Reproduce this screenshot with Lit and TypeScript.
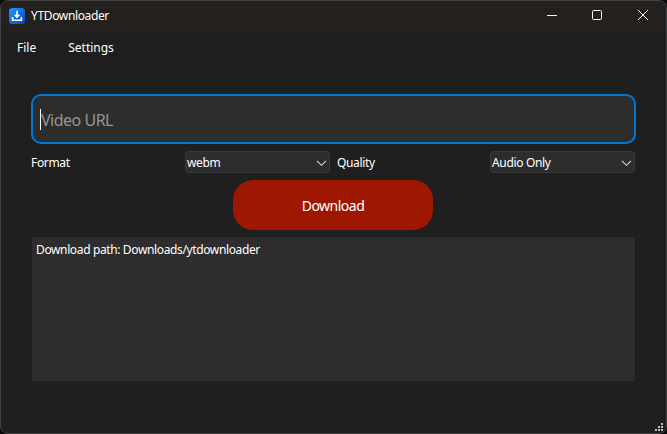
import { LitElement, html, css } from "lit";
import { customElement, property } from "lit/decorators.js";

@customElement("select-box")
class SelectBox extends LitElement {
  @property() value = "";
  @property({ type: Boolean, reflect: true }) warm = false;
  static styles = css`
    :host {
      display: flex;
      align-items: center;
      justify-content: space-between;
      box-sizing: border-box;
      width: 145px;
      height: 22px;
      padding: 0 2px 0 1px;
      background: #2d2d2d;
      border: 1px solid #3b3b3b;
      border-radius: 4px;
      color: #fff;
    }
    span { padding-top: 2px; }
    svg { display: block; margin-top: 1px; stroke: #c4dcec; }
    :host([warm]) svg { stroke: #f0d2b0; }
  `;
  render() {
    return html`<span>${this.value}</span>
      <svg width="11" height="8" viewBox="0 0 11 8" fill="none" stroke-width="1.15">
        <path d="M1 1.8 L5.5 6.3 L10 1.8" />
      </svg>`;
  }
}

@customElement("app-root")
class AppRoot extends LitElement {
  static styles = css`
    :host {
      display: block;
      width: 667px;
      height: 434px;
      background: #0c0c0d;
      color: #fff;
      font: 12px/16px "Noto Sans", "Open Sans", sans-serif;
      letter-spacing: -0.34px;
      white-space: nowrap;
    }
    .window {
      box-sizing: border-box;
      width: 667px;
      height: 434px;
      display: flex;
      flex-direction: column;
      background: #1f1f1f;
      border: 1px solid #414243;
      border-radius: 8px;
      overflow: hidden;
    }
    .titlebar {
      display: flex;
      align-items: center;
      height: 30px;
      padding-left: 8px;
      background: #24201d;
    }
    .logo { display: block; margin: -1px 6px 0 0; }
    .title { flex: 1; letter-spacing: -0.36px; }
    .controls { display: flex; }
    .controls svg { display: block; }
    .menu { display: flex; gap: 32px; padding: 9px 16px 0; height: 23px; letter-spacing: 0; }
    .content { padding: 31px 30px 0; }
    .url {
      display: flex;
      align-items: center;
      box-sizing: border-box;
      height: 50px;
      padding-left: 7px;
      background: #2d2d2d;
      border: 2px solid #0078d4;
      border-radius: 10px;
      font-size: 16px;
      letter-spacing: -0.5px;
      color: #959595;
    }
    .hint { padding-top: 2px; }
    .caret { width: 1px; height: 21px; background: #fff; }
    .options { display: flex; align-items: center; height: 22px; margin-top: 7px; }
    .format { width: 154px; padding-top: 2px; }
    .quality { width: 153px; margin-left: 7px; padding-top: 2px; }
    .download {
      display: flex;
      align-items: center;
      justify-content: center;
      box-sizing: border-box;
      width: 200px;
      height: 50px;
      padding-top: 2px;
      margin: 7px 0 7px 202px;
      background: #9e1700;
      border-radius: 20px;
      font-size: 14px;
      letter-spacing: -0.5px;
    }
    .log {
      box-sizing: border-box;
      height: 144px;
      margin: 0 1px;
      padding: 5px 4px;
      background: #2d2d2d;
      letter-spacing: -0.37px;
    }
    .grip { align-self: flex-end; display: block; margin: auto 3px 2px 0; }
  `;
  render() {
    return html`<div class="window">
      <div class="titlebar">
        <svg class="logo" width="16" height="16" viewBox="0 0 16 16">
          <defs><linearGradient id="g" x1="0" y1="0" x2="1" y2="1">
            <stop offset="0" stop-color="#2896ff" /><stop offset="1" stop-color="#0647b8" />
          </linearGradient></defs>
          <rect width="16" height="16" rx="3.6" fill="url(#g)" />
          <path d="M8 2.8 V8.5 M5.6 6.8 L8 9.2 L10.4 6.8 M3.6 9 V12.2 H12.4 V9" fill="none" stroke="#fff" stroke-width="1.6" />
        </svg>
        <span class="title">YTDownloader</span>
        <div class="controls">
          <svg width="137" height="30" viewBox="529 1 137 30" fill="none" stroke="#fff">
            <path d="M547 15.5 H557" />
            <rect x="592.5" y="10.5" width="9" height="9" rx="1" />
            <path d="M638 10 L648 20 M648 10 L638 20" />
          </svg>
        </div>
      </div>
      <div class="menu"><span>File</span><span>Settings</span></div>
      <div class="content">
        <div class="url"><span class="caret"></span><span class="hint">Video URL</span></div>
        <div class="options">
          <span class="format">Format</span><select-box value="webm"></select-box>
          <span class="quality">Quality</span><select-box value="Audio Only" warm></select-box>
        </div>
        <div class="download"><span>Download</span></div>
        <div class="log">Download path: Downloads/ytdownloader</div>
      </div>
      <svg class="grip" width="8" height="8" viewBox="0 0 8 8" fill="#bdbdbd">
        <path d="M6 0h2v2h-2z M3 3h2v2h-2z M6 3h2v2h-2z M0 6h2v2h-2z M3 6h2v2h-2z M6 6h2v2h-2z" />
      </svg>
    </div>`;
  }
}
